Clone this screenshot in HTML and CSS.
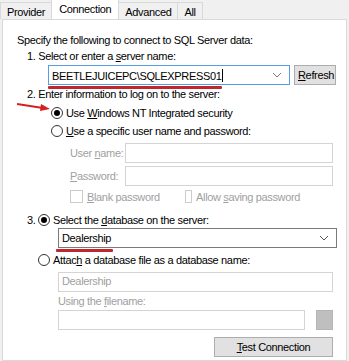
FILE: index.html
```html
<!DOCTYPE html>
<html lang="en">
<head>
    <meta charset="UTF-8">
    <title>Data Link Properties</title>
    <link rel="stylesheet" href="styles.css">
</head>
<body>
    <div class="dialog">
        <div class="tabs">
            <div class="tab">Provider</div>
            <div class="tab active">Connection</div>
            <div class="tab">Advanced</div>
            <div class="tab">All</div>
        </div>
        <div class="panel">
            <p class="intro">Specify the following to connect to SQL Server data:</p>

            <p class="step">1. Select or enter a <u>s</u>erver name:</p>
            <div class="row server-row">
                <div class="combo focused">
                    <span class="combo-text">BEETLEJUICEPC\SQLEXPRESS01<span class="caret"></span></span>
                    <svg class="chevron" width="10" height="6" viewBox="0 0 10 6"><path d="M1 1 L5 5 L9 1" fill="none" stroke="#7a7a7a" stroke-width="1"/></svg>
                </div>
                <button class="btn refresh"><u>R</u>efresh</button>
                <span class="mark mark-server"></span>
            </div>

            <p class="step">2. Enter information to log on to the server:</p>
            <div class="option">
                <span class="radio checked"></span>
                <span>Use <u>W</u>indows NT Integrated security</span>
                <svg class="arrow" width="34" height="10" viewBox="0 0 34 10"><path d="M0 2 L26 6" stroke="#d42020" stroke-width="2"/><path d="M24 2 L33 7 L23 9 Z" fill="#d42020"/></svg>
            </div>
            <div class="option">
                <span class="radio"></span>
                <span><u>U</u>se a specific user name and password:</span>
            </div>
            <div class="creds">
                <div class="field-row">
                    <label class="muted">User <u>n</u>ame:</label>
                    <div class="input disabled"></div>
                </div>
                <div class="field-row">
                    <label class="muted"><u>P</u>assword:</label>
                    <div class="input disabled"></div>
                </div>
                <div class="checks">
                    <span class="check-item"><span class="checkbox"></span><span class="muted"><u>B</u>lank password</span></span>
                    <span class="check-item"><span class="checkbox"></span><span class="muted">Allow <u>s</u>aving password</span></span>
                </div>
            </div>

            <div class="option step3">
                <span class="num">3.</span>
                <span class="radio checked"></span>
                <span>Select the <u>d</u>atabase on the server:</span>
            </div>
            <div class="indent db-row">
                <div class="combo">
                    <span class="combo-text">Dealership</span>
                    <svg class="chevron" width="10" height="6" viewBox="0 0 10 6"><path d="M1 1 L5 5 L9 1" fill="none" stroke="#555" stroke-width="1"/></svg>
                </div>
                <span class="mark mark-db"></span>
            </div>
            <div class="option attach">
                <span class="radio"></span>
                <span>Attac<u>h</u> a database file as a database name:</span>
            </div>
            <div class="indent attach-fields">
                <div class="input disabled muted-text">Dealership</div>
                <p class="muted using">Using the <u>f</u>ilename:</p>
                <div class="file-row">
                    <div class="input disabled"></div>
                    <span class="browse"></span>
                </div>
            </div>
            <div class="footer">
                <button class="btn test"><u>T</u>est Connection</button>
            </div>
        </div>
    </div>
</body>
</html>
```

FILE: styles.css
```css
* {
    box-sizing: border-box;
}
body {
    margin: 0;
    background: #f0f0f0;
    font-family: "Liberation Sans", Arial, sans-serif;
    font-size: 11px;
    letter-spacing: -0.35px;
    color: #000;
    white-space: nowrap;
}
u {
    text-decoration: underline;
    text-underline-offset: 1px;
}
p {
    margin: 0;
}
.dialog {
    width: 349px;
    height: 361px;
}
.tabs {
    display: flex;
    height: 19px;
    padding-top: 2px;
    align-items: flex-end;
}
.tab {
    height: 17px;
    padding: 2px 6px 0 6px;
    border: 1px solid #d9d9d9;
    border-bottom: none;
    background: #f0f0f0;
    margin-right: -1px;
    line-height: 14px;
}
.tab.active {
    height: 20px;
    margin-top: -2px;
    background: #fff;
    position: relative;
    z-index: 1;
    padding: 2px 7px 0 7px;
}
.panel {
    margin-left: 2px;
    width: 345px;
    height: 342px;
    background: #fff;
    border: 1px solid #d9d9d9;
    padding: 13px 0 0 14px;
}
.intro {
    line-height: 14px;
}
.step {
    margin: 2px 0 0 10px;
    line-height: 14px;
}
.row {
    display: flex;
    align-items: center;
    position: relative;
}
.server-row {
    margin: 2px 0 0 31px;
    gap: 4px;
}
.combo {
    height: 20px;
    border: 1px solid #adadad;
    display: flex;
    align-items: center;
    justify-content: space-between;
    padding: 0 7px 0 3px;
    background: #fff;
}
.combo.focused {
    width: 242px;
    border-color: #569de5;
}
.caret {
    display: inline-block;
    width: 1px;
    height: 13px;
    background: #000;
    vertical-align: -2px;
    margin-left: 1px;
}
.btn {
    font: inherit;
    letter-spacing: inherit;
    height: 20px;
    border: 1px solid #adadad;
    background: #e1e1e1;
    padding: 0 3px;
    color: #000;
}
.refresh {
    width: 42px;
}
.mark {
    position: absolute;
    height: 3px;
    background: #c0262c;
    border-radius: 1px;
}
.mark-server {
    left: 0;
    top: 21px;
    width: 174px;
}
.option {
    display: flex;
    align-items: center;
    gap: 3px;
    margin: 5px 0 0 34px;
    height: 13px;
    position: relative;
}
.radio {
    width: 12px;
    height: 12px;
    border-radius: 50%;
    border: 1px solid #333;
    background: #fff;
    position: relative;
}
.radio.checked::after {
    content: "";
    position: absolute;
    left: 2px;
    top: 2px;
    width: 6px;
    height: 6px;
    border-radius: 50%;
    background: #000;
}
.arrow {
    position: absolute;
    left: -34px;
    top: -4px;
}
.creds {
    margin: 6px 0 0 53px;
}
.muted {
    color: #a0a0a0;
}
.muted-text {
    color: #a0a0a0;
}
.field-row {
    display: flex;
    align-items: center;
    margin-bottom: 3px;
}
.field-row label {
    width: 55px;
}
.input {
    height: 20px;
    border: 1px solid #cfcfcf;
    background: #fff;
    flex: 1;
    padding: 2px 3px 0;
    margin-right: 13px;
}
.input.disabled {
    border-color: #d4d4d4;
}
.checks {
    display: flex;
    margin-top: 0;
    height: 15px;
    align-items: center;
}
.check-item {
    display: flex;
    align-items: center;
    gap: 4px;
    width: 115px;
}
.checkbox {
    width: 13px;
    height: 13px;
    border: 1px solid #ccc;
    background: #fff;
}
.option.step3 {
    margin: 9px 0 0 10px;
    gap: 3px;
}
.num {
    width: 8px;
}
.indent {
    margin: 5px 13px 0 41px;
    position: relative;
}
.indent.db-row {
    margin-top: 2px;
}
.db-row .combo {
    width: 279px;
    border-color: #7a7a7a;
}
.mark-db {
    left: -2px;
    top: 21px;
    width: 57px;
}
.option.attach {
    margin: 5px 0 0 21px;
}
.indent .input {
    margin-right: 0;
}
.indent.attach-fields {
    margin-top: 6px;
}
.using {
    margin: 2px 0 2px;
    line-height: 14px;
}
.file-row {
    display: flex;
    gap: 11px;
}
.browse {
    width: 17px;
    height: 20px;
    background: #bfbfbf;
    border: 1px solid #b5b5b5;
}
.footer {
    display: flex;
    justify-content: flex-end;
    margin: 7px 13px 0 0;
}
.test {
    width: 119px;
}
```
